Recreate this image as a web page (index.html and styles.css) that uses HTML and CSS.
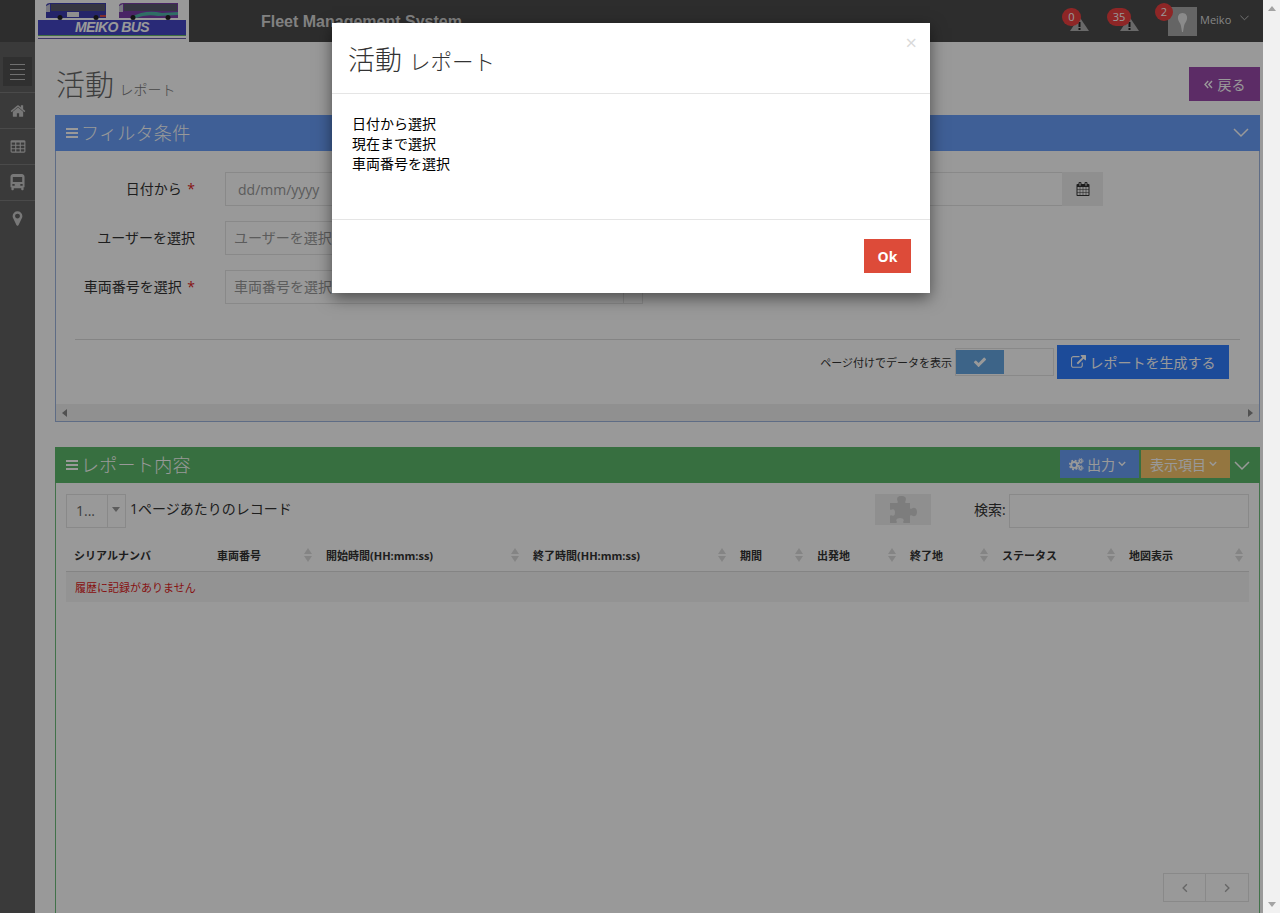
FILE: index.html
```html
<!DOCTYPE html>
<html lang="ja">

<head>
    <meta charset="UTF-8">
    <meta name="viewport" content="width=device-width, initial-scale=1.0">
    <title>活動 レポート</title>
    <link rel="stylesheet" href="styles.css">
</head>

<body>
<div class="page">
    <header class="topbar">
        <div class="logo">
            <svg class="logo-buses" viewBox="0 0 148 18" width="148" height="18">
                <path d="M8 3 Q9 1 12 1 H68 V16 H8 Z" fill="#3c3cb0"/>
                <rect x="13" y="2" width="54" height="7" fill="#5a5a6e"/>
                <path d="M8 4 L12 2 L12 10 L8 10 Z" fill="#c8c8d8"/>
                <rect x="29" y="10" width="12" height="5" fill="#eee"/>
                <rect x="62" y="13" width="6" height="2" fill="#d84a4a"/>
                <circle cx="22" cy="15.500" r="2.500" fill="#222"/>
                <circle cx="58" cy="15.500" r="2.500" fill="#222"/>
                <path d="M81 3 Q82 1 85 1 H140 V16 H81 Z" fill="#7a3fa8"/>
                <rect x="86" y="2" width="53" height="7" fill="#5a5a6e"/>
                <path d="M81 4 L85 2 L85 10 L81 10 Z" fill="#c8c8d8"/>
                <path d="M93 15 Q108 7 124 11 L140 10 L140 13 L120 14 Q108 12 98 16 Z" fill="#4fb7a8"/>
                <circle cx="95" cy="15.500" r="2.500" fill="#222"/>
                <circle cx="130" cy="15.500" r="2.500" fill="#222"/>
            </svg>
            <div class="logo-band">MEIKO BUS</div>
            <div class="logo-green"></div>
            <div class="logo-purple"></div>
        </div>
        <div class="system-name">Fleet Management System</div>
        <div class="topbar-right">
            <div class="alert alert-first">
                <svg class="alert-icon" viewBox="0 0 19 14" width="19" height="14"><path d="M9.500 0 L19 14 L0 14 Z" fill="#b0b0b0"/><rect x="8.500" y="5" width="2" height="5" fill="#222"/><rect x="8.500" y="11" width="2" height="2" fill="#222"/></svg>
                <span class="badge">0</span>
            </div>
            <div class="alert alert-second">
                <svg class="alert-icon" viewBox="0 0 19 14" width="19" height="14"><path d="M9.500 0 L19 14 L0 14 Z" fill="#b0b0b0"/><rect x="8.500" y="5" width="2" height="5" fill="#222"/><rect x="8.500" y="11" width="2" height="2" fill="#222"/></svg>
                <span class="badge badge-wide">35</span>
            </div>
            <div class="user">
                <div class="avatar">
                    <svg viewBox="0 0 29 29" width="29" height="29"><path d="M14.500 6 C18 6 19.500 9 19 12 C18.500 15 16.500 16 16 19 L15 25 L14 25 L13 19 C12.500 16 10.500 15 10 12 C9.500 9 11 6 14.500 6 Z" fill="#e6e6e6"/></svg>
                </div>
                <span class="badge badge-user">2</span>
                <span class="user-name">Meiko</span>
                <svg class="user-caret" viewBox="0 0 10 6" width="9" height="6"><path d="M.5 .5 L5 5 L9.500 .5" fill="none" stroke="#ccc"/></svg>
            </div>
        </div>
    </header>

    <div class="main">
        <nav class="sidebar">
            <div class="side-item side-toggle">
                <div class="toggle-box"><span></span><span></span><span></span><span></span></div>
            </div>
            <div class="side-item">
                <svg viewBox="0 0 1792 1792" width="16" height="16"><path d="M1472 992v480q0 26-19 45t-45 19h-384v-384h-256v384h-384q-26 0-45-19t-19-45v-480q0-1 .5-3t.5-3l575-474 575 474q1 2 1 6zm223-69l-62 74q-8 9-21 11h-3q-13 0-21-7l-692-577-692 577q-12 8-24 7-13-2-21-11l-62-74q-8-10-7-23.500t11-21.500l719-599q32-26 76-26t76 26l244 204v-195q0-14 9-23t23-9h192q14 0 23 9t9 23v408l219 182q10 8 11 21.500t-7 23.500z"/></svg>
            </div>
            <div class="side-item">
                <svg viewBox="0 0 1792 1792" width="16" height="16"><path d="M576 1376v-192q0-14-9-23t-23-9h-320q-14 0-23 9t-9 23v192q0 14 9 23t23 9h320q14 0 23-9t9-23zm0-384v-192q0-14-9-23t-23-9h-320q-14 0-23 9t-9 23v192q0 14 9 23t23 9h320q14 0 23-9t9-23zm512 384v-192q0-14-9-23t-23-9h-320q-14 0-23 9t-9 23v192q0 14 9 23t23 9h320q14 0 23-9t9-23zm-512-768v-192q0-14-9-23t-23-9h-320q-14 0-23 9t-9 23v192q0 14 9 23t23 9h320q14 0 23-9t9-23zm512 384v-192q0-14-9-23t-23-9h-320q-14 0-23 9t-9 23v192q0 14 9 23t23 9h320q14 0 23-9t9-23zm512 384v-192q0-14-9-23t-23-9h-320q-14 0-23 9t-9 23v192q0 14 9 23t23 9h320q14 0 23-9t9-23zm-512-768v-192q0-14-9-23t-23-9h-320q-14 0-23 9t-9 23v192q0 14 9 23t23 9h320q14 0 23-9t9-23zm512 384v-192q0-14-9-23t-23-9h-320q-14 0-23 9t-9 23v192q0 14 9 23t23 9h320q14 0 23-9t9-23zm0-384v-192q0-14-9-23t-23-9h-320q-14 0-23 9t-9 23v192q0 14 9 23t23 9h320q14 0 23-9t9-23zm128-320v1088q0 66-47 113t-113 47h-1344q-66 0-113-47t-47-113v-1088q0-66 47-113t113-47h1344q66 0 113 47t47 113z"/></svg>
            </div>
            <div class="side-item">
                <svg viewBox="0 0 16 18" width="15" height="17"><path fill-rule="evenodd" d="M3.500 0 H12.500 C14.500 0 15.500 1.500 15.500 3 V14 H14.500 V16.500 C14.500 17.500 12 17.500 12 16.500 V15 H4 V16.500 C4 17.500 1.500 17.500 1.500 16.500 V14 H.5 V3 C.5 1.500 1.500 0 3.500 0 Z M3 3 V8.500 H13 V3 Z M2.500 10.500 V12.500 H5 V10.500 Z M11 10.500 V12.500 H13.500 V10.500 Z"/></svg>
            </div>
            <div class="side-item side-last">
                <svg viewBox="0 0 1792 1792" width="17" height="17"><path d="M1152 640q0-106-75-181t-181-75-181 75-75 181 75 181 181 75 181-75 75-181zm256 0q0 109-33 179l-364 774q-16 33-47.500 52t-67.500 19-67.500-19-46.500-52l-365-774q-33-70-33-179 0-212 150-362t362-150 362 150 150 362z"/></svg>
            </div>
        </nav>

        <main class="content">
            <div class="page-head">
                <h1 class="page-title">活動 <small>レポート</small></h1>
                <button class="btn btn-back" type="button">
                    <svg viewBox="0 0 9 9" width="9" height="9"><path d="M4.200 1 L1 4.500 L4.200 8 M8 1 L4.800 4.500 L8 8" fill="none" stroke="#fff" stroke-width="1.400"/></svg>
                    戻る
                </button>
            </div>

            <section class="panel panel-blue">
                <div class="panel-head">
                    <div class="panel-caption"><span class="bars"><i></i><i></i><i></i></span>フィルタ条件</div>
                    <svg class="panel-chevron" viewBox="0 0 16 10" width="16" height="10"><path d="M1 1 L8 8 L15 1" fill="none" stroke="#fff" stroke-width="1.500"/></svg>
                </div>
                <div class="panel-body filter-body">
                    <div class="form-row">
                        <label class="form-label">日付から <b>*</b></label>
                        <div class="date-group">
                            <input class="form-input date-input" type="text" placeholder="dd/mm/yyyy">
                            <span class="addon">
                                <svg viewBox="0 0 1792 1792" width="14" height="14"><path d="M192 1664h288v-288h-288v288zm352 0h320v-288h-320v288zm-352-352h288v-320h-288v320zm352 0h320v-320h-320v320zm-352-384h288v-288h-288v288zm736 736h320v-288h-320v288zm-384-736h320v-288h-320v288zm768 736h288v-288h-288v288zm-384-352h320v-320h-320v320zm-352-864v-288q0-13-9.500-22.500t-22.500-9.500h-64q-13 0-22.500 9.500t-9.500 22.500v288q0 13 9.500 22.500t22.500 9.500h64q13 0 22.500-9.500t9.500-22.500zm736 864h288v-320h-288v320zm-384-384h320v-288h-320v288zm384 0h288v-288h-288v288zm32-480v-288q0-13-9.500-22.500t-22.500-9.500h-64q-13 0-22.500 9.500t-9.500 22.500v288q0 13 9.500 22.500t22.500 9.500h64q13 0 22.500-9.500t9.500-22.500zm384-64v1280q0 52-38 90t-90 38h-1408q-52 0-90-38t-38-90v-1280q0-52 38-90t90-38h128v-96q0-66 47-113t113-47h64q66 0 113 47t47 113v96h384v-96q0-66 47-113t113-47h64q66 0 113 47t47 113v96h128q52 0 90 38t38 90z" fill="#333"/></svg>
                            </span>
                        </div>
                    </div>
                    <div class="form-row">
                        <label class="form-label">ユーザーを選択</label>
                        <div class="select-box">
                            <span class="select-text">ユーザーを選択</span>
                            <span class="select-end"></span>
                        </div>
                    </div>
                    <div class="form-row">
                        <label class="form-label">車両番号を選択 <b>*</b></label>
                        <div class="select-box">
                            <span class="select-text">車両番号を選択</span>
                            <span class="select-end"></span>
                        </div>
                    </div>
                    <hr class="form-rule">
                    <div class="form-actions">
                        <span class="paging-label">ページ付けでデータを表示</span>
                        <div class="switch">
                            <span class="switch-on">
                                <svg viewBox="0 0 1792 1792" width="14" height="14"><path d="M1671 566q0 40-28 68l-724 724-136 136q-28 28-68 28t-68-28l-136-136-362-362q-28-28-28-68t28-68l136-136q28-28 68-28t68 28l294 295 656-657q28-28 68-28t68 28l136 136q28 28 28 68z" fill="#fff"/></svg>
                            </span>
                        </div>
                        <button class="btn btn-generate" type="button">
                            <svg viewBox="0 0 1792 1792" width="15" height="15"><path d="M1408 928v320q0 119-84.500 203.500t-203.500 84.500h-832q-119 0-203.500-84.500t-84.500-203.500v-832q0-119 84.500-203.500t203.500-84.500h704q14 0 23 9t9 23v64q0 14-9 23t-23 9h-704q-66 0-113 47t-47 113v832q0 66 47 113t113 47h832q66 0 113-47t47-113v-320q0-14 9-23t23-9h64q14 0 23 9t9 23zm384-864v512q0 26-19 45t-45 19-45-19l-176-176-652 652q-10 10-23 10t-23-10l-114-114q-10-10-10-23t10-23l652-652-176-176q-19-19-19-45t19-45 45-19h512q26 0 45 19t19 45z" fill="#fff"/></svg>
                            レポートを生成する
                        </button>
                    </div>
                </div>
                <div class="hscroll">
                    <span class="arrow-left"></span>
                    <span class="arrow-right"></span>
                </div>
            </section>

            <section class="panel panel-green">
                <div class="panel-head">
                    <div class="panel-caption"><span class="bars"><i></i><i></i><i></i></span>レポート内容</div>
                    <div class="head-tools">
                        <button class="btn btn-export" type="button">
                            <svg viewBox="0 0 16 14" width="15" height="13">
                                <circle cx="5.500" cy="7.500" r="3.200" fill="none" stroke="#fff" stroke-width="2"/>
                                <circle cx="5.500" cy="7.500" r="4.800" fill="none" stroke="#fff" stroke-width="1.800" stroke-dasharray="2 1.770"/>
                                <circle cx="12.500" cy="3.200" r="1.500" fill="none" stroke="#fff" stroke-width="1.300"/>
                                <circle cx="12.500" cy="3.200" r="2.600" fill="none" stroke="#fff" stroke-width="1" stroke-dasharray="1.200 .84"/>
                                <circle cx="12.500" cy="10.800" r="1.500" fill="none" stroke="#fff" stroke-width="1.300"/>
                                <circle cx="12.500" cy="10.800" r="2.600" fill="none" stroke="#fff" stroke-width="1" stroke-dasharray="1.200 .84"/>
                            </svg>
                            出力
                            <svg viewBox="0 0 8 6" width="8" height="6"><path d="M.8 1 L4 4.200 L7.200 1" fill="none" stroke="#fff" stroke-width="1.400"/></svg>
                        </button>
                        <button class="btn btn-columns" type="button">
                            表示項目
                            <svg viewBox="0 0 8 6" width="8" height="6"><path d="M.8 1 L4 4.200 L7.200 1" fill="none" stroke="#fff" stroke-width="1.400"/></svg>
                        </button>
                        <svg class="panel-chevron" viewBox="0 0 16 10" width="16" height="10"><path d="M1 1 L8 8 L15 1" fill="none" stroke="#fff" stroke-width="1.500"/></svg>
                    </div>
                </div>
                <div class="panel-body report-body">
                    <div class="table-tools">
                        <div class="length-select">
                            <span class="length-value">1...</span>
                            <span class="length-arrow"></span>
                        </div>
                        <span class="length-label">1ページあたりのレコード</span>
                        <div class="plugin-box">
                            <svg viewBox="0 0 28 28" width="28" height="28"><path d="M1 7 H8 C9 7 9 6 8.500 5 C7 1 10 0 12.500 0 C15 0 18 1 16.500 5 C16 6 16 7 17 7 H21 V12 C21 13 22 13 23 12.500 C25 11 28 12 28 16 C28 20 25 21 23 19.500 C22 19 21 19 21 20 V27 H15 C14 27 14 26 14.500 25 C15.500 23 13 22 11 22 C9 22 6.500 23 7.500 25 C8 26 8 27 7 27 H1 V20 C1 19 2 19 3 19.500 C5 20.500 6 19 6 16.500 C6 14 5 12.500 3 13.500 C2 14 1 14 1 13 Z" fill="#d0d0d0"/></svg>
                        </div>
                        <label class="search-label">検索:</label>
                        <input class="search-input" type="text">
                    </div>

                    <table class="report-table">
                        <thead>
                            <tr>
                                <th>シリアルナンバ</th>
                                <th><div class="th-in">車両番号<span class="sort"></span></div></th>
                                <th><div class="th-in">開始時間(HH:mm:ss)<span class="sort"></span></div></th>
                                <th><div class="th-in">終了時間(HH:mm:ss)<span class="sort"></span></div></th>
                                <th><div class="th-in">期間<span class="sort"></span></div></th>
                                <th><div class="th-in">出発地<span class="sort"></span></div></th>
                                <th><div class="th-in">終了地<span class="sort"></span></div></th>
                                <th><div class="th-in">ステータス<span class="sort"></span></div></th>
                                <th><div class="th-in">地図表示<span class="sort"></span></div></th>
                            </tr>
                        </thead>
                        <tbody>
                            <tr>
                                <td class="empty-row" colspan="9">履歴に記録がありません</td>
                            </tr>
                        </tbody>
                    </table>

                    <div class="pager">
                        <span class="pager-btn">
                            <svg viewBox="0 0 8 12" width="6" height="10"><path d="M6.500 1 L1.500 6 L6.500 11" fill="none" stroke="#aaa" stroke-width="1.800"/></svg>
                        </span>
                        <span class="pager-btn">
                            <svg viewBox="0 0 8 12" width="6" height="10"><path d="M1.500 1 L6.500 6 L1.500 11" fill="none" stroke="#aaa" stroke-width="1.800"/></svg>
                        </span>
                    </div>
                </div>
            </section>
        </main>
    </div>
</div>

<div class="vscroll">
    <span class="arrow-up"></span>
    <span class="arrow-down"></span>
</div>

<div class="backdrop"></div>

<div class="modal">
    <div class="modal-head">
        <h3 class="modal-title">活動 <small>レポート</small></h3>
        <span class="modal-close">×</span>
    </div>
    <div class="modal-body">
        日付から選択<br>
        現在まで選択<br>
        車両番号を選択
    </div>
    <div class="modal-foot">
        <button class="btn btn-ok" type="button">Ok</button>
    </div>
</div>
</body>

</html>
```

FILE: styles.css
```css
* {
    box-sizing: border-box;
}

html,
body {
    height: 913px;
    margin: 0;
    overflow: hidden;
}

body {
    display: flex;
    font-family: "Open Sans", "Noto Sans CJK JP", sans-serif;
    font-size: 14px;
    color: #333;
    background-color: #fff;
}

.page {
    width: 1263px;
    height: 913px;
    display: flex;
    flex-direction: column;
    flex-shrink: 0;
}

/* top bar */
.topbar {
    height: 42px;
    flex-shrink: 0;
    display: flex;
    background-color: #4b4b4b;
    padding-left: 35px;
}

.logo {
    width: 154px;
    height: 42px;
    background-color: #fff;
    padding: 2px 3px 0;
}

.logo-buses {
    display: block;
}

.logo-band {
    width: 148px;
    height: 15px;
    background-color: #4547c6;
    color: #fff;
    font-family: "Liberation Sans Narrow", "Liberation Sans", sans-serif;
    font-style: italic;
    font-weight: bold;
    font-size: 14px;
    letter-spacing: -0.6px;
    line-height: 15px;
    text-align: center;
}

.logo-green {
    width: 148px;
    height: 1px;
    background-color: #68b96d;
    margin-bottom: 2px;
}

.logo-purple {
    width: 148px;
    height: 1px;
    background-color: #6a5ab0;
}

.system-name {
    margin-left: 72px;
    padding-top: 13px;
    font-family: "Liberation Sans", sans-serif;
    font-weight: bold;
    font-size: 16px;
    line-height: 18px;
    color: #d8d8d8;
}

.topbar-right {
    margin-left: auto;
    display: flex;
    width: 202px;
}

.alert {
    position: relative;
    width: 45px;
}

.alert-second {
    width: 48px;
}

.alert-icon {
    position: absolute;
    top: 17px;
    left: 9px;
}

.alert-second .alert-icon {
    left: 14px;
}

.badge {
    position: absolute;
    top: 8px;
    left: 1px;
    min-width: 19px;
    height: 18px;
    border-radius: 10px;
    background-color: #ed4040;
    color: #fff;
    font-size: 11px;
    line-height: 18px;
    text-align: center;
}

.badge-wide {
    width: 24px;
}

.user {
    position: relative;
    display: flex;
    align-items: flex-start;
    width: 109px;
}

.badge-user {
    top: 3px;
    left: 1px;
    height: 18px;
    width: 18px;
    min-width: 18px;
}

.avatar {
    width: 29px;
    height: 29px;
    margin: 7px 0 0 14px;
    background-color: #a8a8a8;
}

.user-name {
    margin: 12px 0 0 3px;
    font-size: 11px;
    line-height: 16px;
    color: #ddd;
}

.user-caret {
    margin: 15px 0 0 9px;
}

/* sidebar */
.main {
    flex: 1;
    display: flex;
    min-height: 0;
}

.sidebar {
    width: 35px;
    flex-shrink: 0;
    background-color: #626262;
    padding-top: 15px;
}

.side-item {
    height: 36px;
    display: flex;
    align-items: center;
    justify-content: center;
    border-bottom: 1px solid #7c7c7c;
    fill: #c8c8c8;
}

.side-last {
    border-bottom: none;
    padding-bottom: 2px;
}

.side-toggle {
    align-items: flex-start;
}

.toggle-box {
    width: 29px;
    height: 29px;
    background-color: #505050;
    display: flex;
    flex-direction: column;
    justify-content: center;
    gap: 4px;
    padding: 0 7px;
}

.toggle-box span {
    height: 1px;
    background-color: #bbb;
}

/* content */
.content {
    flex: 1;
    min-width: 0;
    padding: 25px 3px 0 20px;
    overflow: hidden;
    background-color: #fff;
}

.page-head {
    display: flex;
    justify-content: space-between;
    height: 48px;
}

.page-title {
    margin: 0;
    padding-left: 1px;
    font-size: 29px;
    font-weight: 300;
    line-height: 36px;
    color: #666;
}

.page-title small {
    margin-left: -2px;
    font-size: 14px;
    color: #777;
    font-weight: 300;
    vertical-align: 1px;
}

.btn {
    border: none;
    font-family: inherit;
    color: #fff;
    cursor: pointer;
}

.btn-back {
    width: 71px;
    height: 34px;
    background-color: #9a4aab;
    font-size: 14px;
    display: flex;
    align-items: center;
    justify-content: center;
    gap: 5px;
}

.panel {
    border: 1px solid #9db4de;
    border-top: none;
}

.panel-green {
    margin-top: 25px;
    border-color: #6dbd7b;
    height: 467px;
}

.panel-head {
    height: 36px;
    margin: 0 -1px;
    display: flex;
    align-items: center;
    justify-content: space-between;
    padding: 0 11px;
    color: #fff;
}

.panel-blue .panel-head {
    background-color: #6a9ffa;
}

.panel-green .panel-head {
    background-color: #5cba6b;
}

.panel-caption {
    display: flex;
    align-items: center;
    font-size: 18px;
    letter-spacing: 0.3px;
    line-height: 24px;
    font-weight: 300;
}

.panel-green .panel-caption {
    margin-top: -1px;
}

.bars {
    width: 12px;
    margin-right: 3px;
    display: flex;
    flex-direction: column;
    gap: 2px;
}

.bars i {
    height: 2px;
    background-color: #fff;
}

.panel-chevron {
    flex-shrink: 0;
}

.filter-body {
    height: 253px;
    padding-top: 21px;
}

.form-row {
    display: flex;
    margin-bottom: 15px;
}

.form-label {
    width: 139px;
    margin-right: 30px;
    text-align: right;
    line-height: 34px;
    color: #333;
}

.form-label b {
    color: #e02222;
    font-weight: normal;
    margin-left: 2px;
}

.date-group {
    display: flex;
    width: 878px;
}

.form-input {
    height: 34px;
    border: 1px solid #e5e5e5;
    padding: 0 12px;
    font-family: inherit;
    font-size: 14px;
    outline: none;
}

.form-input::placeholder {
    color: #999;
}

.date-input {
    flex: 1;
    border-right: none;
}

.addon {
    width: 41px;
    height: 34px;
    display: flex;
    align-items: center;
    justify-content: center;
    background-color: #eee;
}

.select-box {
    width: 418px;
    height: 34px;
    border: 1px solid #e5e5e5;
    display: flex;
    justify-content: space-between;
    color: #999;
    line-height: 32px;
}

.select-text {
    padding-left: 8px;
}

.select-end {
    width: 19px;
    border-left: 1px solid #e5e5e5;
}

.form-rule {
    margin: 35px 19px 5px;
    border: none;
    border-top: 1px solid #ddd;
}

.form-actions {
    display: flex;
    justify-content: flex-end;
    align-items: center;
    padding-right: 30px;
    height: 34px;
}

.paging-label {
    font-size: 11px;
    color: #333;
    margin-right: 3px;
}

.switch {
    width: 99px;
    height: 28px;
    border: 1px solid #e5e5e5;
    padding: 1px 0;
    margin-right: 3px;
}

.switch-on {
    width: 48px;
    height: 24px;
    display: flex;
    align-items: center;
    justify-content: center;
    background-color: #67a7e3;
}

.btn-generate {
    width: 172px;
    height: 34px;
    background-color: #2f7dff;
    font-size: 14px;
    display: flex;
    align-items: center;
    justify-content: center;
    gap: 4px;
}

.hscroll {
    height: 17px;
    background-color: #f1f1f1;
    display: flex;
    align-items: center;
    justify-content: space-between;
    padding: 0 6px;
}

.arrow-left {
    border: 4px solid transparent;
    border-left: none;
    border-right: 5px solid #888;
}

.arrow-right {
    border: 4px solid transparent;
    border-right: none;
    border-left: 5px solid #888;
}

.head-tools {
    display: flex;
    align-self: stretch;
    align-items: flex-start;
    margin-right: -1px;
}

.btn-export,
.btn-columns {
    height: 28px;
    display: flex;
    align-items: center;
    justify-content: center;
    gap: 3px;
    font-size: 14px;
    padding: 0 4px 0 0;
    margin-top: 3px;
}

.btn-export {
    width: 79px;
    background-color: #6a9ff5;
    margin-right: 2px;
}

.btn-columns {
    width: 89px;
    background-color: #f7c56b;
    margin-right: 4px;
}

.head-tools .panel-chevron {
    margin-top: 14px;
}

/* report table */
.report-body {
    padding: 11px 10px 0;
    position: relative;
    height: 431px;
}

.table-tools {
    display: flex;
    align-items: flex-start;
    height: 34px;
    white-space: nowrap;
}

.table-tools > * {
    flex-shrink: 0;
}

.length-select {
    width: 60px;
    height: 34px;
    border: 1px solid #e5e5e5;
    display: flex;
    color: #666;
    line-height: 32px;
}

.length-value {
    width: 41px;
    padding-left: 9px;
    border-right: 1px solid #e5e5e5;
}

.length-arrow {
    margin: 12px 0 0 4px;
    height: 0;
    border: 4px solid transparent;
    border-bottom: none;
    border-top: 5px solid #999;
}

.length-label {
    width: 162px;
    margin-left: 4px;
    line-height: 30px;
    color: #333;
}

.plugin-box {
    width: 56px;
    height: 31px;
    margin-left: 583px;
    background-color: #eee;
    display: flex;
    align-items: center;
    justify-content: center;
}

.search-label {
    width: 32px;
    margin-left: 43px;
    line-height: 32px;
    color: #333;
}

.search-input {
    width: 240px;
    height: 34px;
    margin-left: 3px;
    border: 1px solid #e5e5e5;
    outline: none;
}

.report-table {
    width: 1183px;
    margin-top: 9px;
    border-collapse: collapse;
    table-layout: fixed;
    font-size: 11px;
}

.report-table th {
    height: 34px;
    padding: 2px 6px 0 8px;
    text-align: left;
    font-weight: bold;
    color: #333;
    border-bottom: 1px solid #ddd;
}

.report-table th:nth-child(1) { width: 143px; }
.report-table th:nth-child(2) { width: 109px; }
.report-table th:nth-child(3) { width: 207px; }
.report-table th:nth-child(4) { width: 207px; }
.report-table th:nth-child(5) { width: 77px; }
.report-table th:nth-child(6) { width: 93px; }
.report-table th:nth-child(7) { width: 92px; }
.report-table th:nth-child(8) { width: 127px; }
.report-table th:nth-child(9) { width: 128px; }

.th-in {
    display: flex;
    align-items: center;
    justify-content: space-between;
}

.sort {
    width: 8px;
    display: flex;
    flex-direction: column;
    gap: 2px;
}

.sort::before,
.sort::after {
    content: "";
    border: 4px solid transparent;
    height: 0;
}

.sort::before {
    border-top: none;
    border-bottom: 6px solid #ddd;
}

.sort::after {
    border-bottom: none;
    border-top: 6px solid #ddd;
}

.empty-row {
    height: 31px;
    padding: 0 9px;
    background-color: #f6f6f6;
    color: #e02222;
}

.pager {
    position: absolute;
    right: 10px;
    bottom: 12px;
    display: flex;
    width: 86px;
    height: 29px;
    border: 1px solid #e5e5e5;
}

.pager-btn {
    width: 41px;
    display: flex;
    align-items: center;
    justify-content: center;
}

.pager-btn + .pager-btn {
    flex: 1;
    border-left: 1px solid #e5e5e5;
}

/* page scrollbar, not covered by the backdrop */
.vscroll {
    width: 17px;
    flex-shrink: 0;
    background-color: #f1f1f1;
    display: flex;
    flex-direction: column;
    justify-content: space-between;
    align-items: center;
    padding: 6px 0;
}

.arrow-up {
    border: 4px solid transparent;
    border-top: none;
    border-bottom: 5px solid #a3a3a3;
    border-left-width: 4.500px;
    border-right-width: 4.500px;
}

.arrow-down {
    border: 4px solid transparent;
    border-bottom: none;
    border-top: 5px solid #a3a3a3;
    border-left-width: 4.500px;
    border-right-width: 4.500px;
}

/* modal */
.backdrop {
    position: absolute;
    top: 0;
    left: 0;
    width: 1263px;
    height: 913px;
    background-color: rgba(0, 0, 0, 0.4);
}

.modal {
    position: absolute;
    top: 23px;
    left: 332px;
    width: 598px;
    height: 270px;
    background-color: #fff;
    box-shadow: 0 5px 15px rgba(0, 0, 0, 0.5);
    display: flex;
    flex-direction: column;
}

.modal-head {
    height: 71px;
    flex-shrink: 0;
    padding: 0 13px 0 16px;
    border-bottom: 1px solid #e5e5e5;
    display: flex;
    justify-content: space-between;
}

.modal-title {
    margin: 15px 0 0;
    font-size: 27px;
    font-weight: 300;
    line-height: 44px;
    color: #333;
}

.modal-title small {
    font-size: 21.500px;
    font-weight: 300;
}

.modal-close {
    margin: 8px 0 0;
    font-size: 20px;
    line-height: 24px;
    color: #d9d9d9;
}

.modal-body {
    height: 125px;
    flex-shrink: 0;
    padding: 20px;
    line-height: 20px;
    color: #000;
}

.modal-foot {
    flex: 1;
    border-top: 1px solid #e5e5e5;
    padding: 19px;
    display: flex;
    justify-content: flex-end;
}

.btn-ok {
    width: 47px;
    height: 34px;
    background-color: #dd4b39;
    font-weight: bold;
    font-size: 14px;
}
```
